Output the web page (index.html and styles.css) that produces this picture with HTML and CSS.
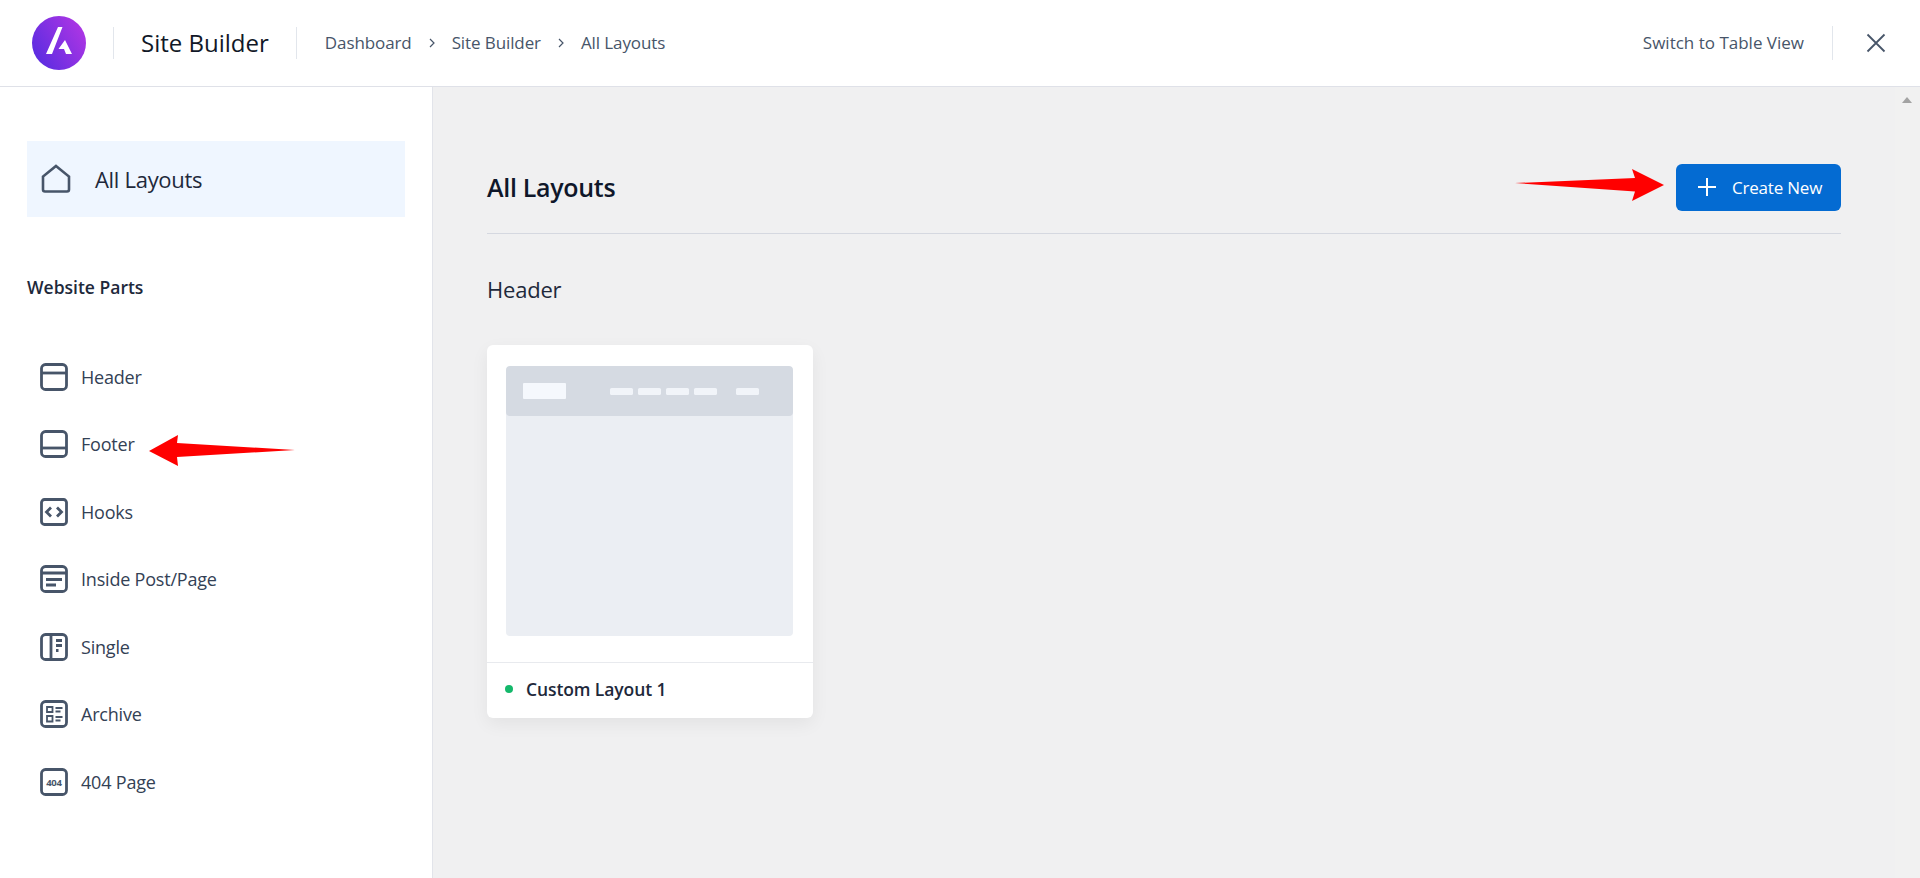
FILE: index.html
```html
<!DOCTYPE html>
<html lang="en">
<head>
    <meta charset="UTF-8">
    <meta name="viewport" content="width=device-width, initial-scale=1.0">
    <title>Site Builder</title>
    <link rel="stylesheet" href="styles.css">
</head>
<body>

    <!-- Top bar -->
    <header class="topbar">
        <svg class="logo" viewBox="0 0 54 54" aria-label="Astra">
            <defs>
                <linearGradient id="logo-grad" x1="0" y1="1" x2="1" y2="0.4">
                    <stop offset="0" stop-color="#4f2be0"/>
                    <stop offset="1" stop-color="#a935e4"/>
                </linearGradient>
            </defs>
            <circle cx="27" cy="27" r="27" fill="url(#logo-grad)"/>
            <path d="M26 11H30.500L20 38H14ZM33 24L40 38H34L32 33H26.500Z" fill="#fff"/>
        </svg>
        <span class="divider"></span>
        <span class="app-name">Site Builder</span>
        <span class="divider"></span>
        <nav class="crumbs">
            <a>Dashboard</a>
            <svg class="crumb-sep" viewBox="0 0 8 12"><path d="M2 2l4 4-4 4"/></svg>
            <a>Site Builder</a>
            <svg class="crumb-sep" viewBox="0 0 8 12"><path d="M2 2l4 4-4 4"/></svg>
            <a>All Layouts</a>
        </nav>
        <div class="topbar-right">
            <a class="switch-view">Switch to Table View</a>
            <span class="divider divider-close"></span>
            <svg class="close" viewBox="0 0 20 20"><path d="M1.500 1.500l17 17M18.500 1.500l-17 17"/></svg>
        </div>
    </header>

    <div class="page">
        <!-- Sidebar -->
        <aside class="sidebar">
            <div class="side-active">
                <svg class="home-icon" viewBox="0 0 30 30"><path d="M15 2L28 12.500V25.500a2 2 0 0 1-2 2H4a2 2 0 0 1-2-2V12.500Z"/></svg>
                <span>All Layouts</span>
            </div>
            <h3 class="side-title">Website Parts</h3>
            <ul class="side-list">
                <li>
                    <svg class="part-icon" viewBox="0 0 28 28"><rect x="1.500" y="1.500" width="25" height="25" rx="4"/><path d="M1.500 10h25"/></svg>
                    Header
                </li>
                <li>
                    <svg class="part-icon" viewBox="0 0 28 28"><rect x="1.500" y="1.500" width="25" height="25" rx="4"/><path d="M1.500 18h25"/></svg>
                    Footer
                </li>
                <li>
                    <svg class="part-icon" viewBox="0 0 28 28"><rect x="1.500" y="1.500" width="25" height="25" rx="3"/><path d="M11 9.500L6.500 14l4.500 4.500M17 9.500l4.500 4.500-4.500 4.500"/></svg>
                    Hooks
                </li>
                <li>
                    <svg class="part-icon" viewBox="0 0 28 28"><rect x="1.500" y="1.500" width="25" height="25" rx="4"/><path d="M1.500 8h25M6 14.500h16M6 20h10"/></svg>
                    Inside Post/Page
                </li>
                <li>
                    <svg class="part-icon" viewBox="0 0 28 28"><rect x="1.500" y="1.500" width="25" height="25" rx="4"/><path d="M11 1.500v25M16 7.500h6M16 12.500h6M16 17.500h2.500"/></svg>
                    Single
                </li>
                <li>
                    <svg class="part-icon" viewBox="0 0 28 28"><rect x="1.500" y="1.500" width="25" height="25" rx="4"/><path class="thin" d="M7 7h5.500v5H7ZM7 16h5.500v5.500H7ZM15.500 8h7M15.500 11.500h5M15.500 17h7M15.500 20.500h5"/></svg>
                    Archive
                </li>
                <li>
                    <svg class="part-icon" viewBox="0 0 28 28"><rect x="1.500" y="1.500" width="25" height="25" rx="4"/><text x="14" y="17.500" class="icon-404">404</text></svg>
                    404 Page
                </li>
            </ul>
        </aside>

        <!-- Main content -->
        <main class="main">
            <div class="content">
                <div class="content-head">
                    <h1>All Layouts</h1>
                    <button class="create-btn">
                        <svg class="plus" viewBox="0 0 18 18"><path d="M9 0v18M0 9h18"/></svg>
                        Create New
                    </button>
                </div>
                <h2 class="section-title">Header</h2>
                <div class="card">
                    <div class="card-body">
                        <div class="preview">
                            <div class="preview-bar">
                                <span class="preview-logo"></span>
                                <span class="preview-links">
                                    <i></i><i></i><i></i><i></i><i class="last"></i>
                                </span>
                            </div>
                        </div>
                    </div>
                    <div class="card-foot">
                        <span class="dot"></span>
                        Custom Layout 1
                    </div>
                </div>
            </div>
            <div class="scrollbar"><span class="scroll-up"></span></div>
        </main>
    </div>

    <!-- Red arrows drawn on top of the screenshot -->
    <svg class="arrow arrow-create" viewBox="0 0 150 34"><path d="M0 15L120 10 117 1 149 17 117 33 120 23.500Z"/></svg>
    <svg class="arrow arrow-footer" viewBox="0 0 147 33"><path d="M0 16L29 0 28 8 146 15 28 22 29 31Z"/></svg>

</body>
</html>
```

FILE: styles.css
```css
* {
    box-sizing: border-box;
}
html, body {
    height: 100%;
}
body {
    margin: 0;
    font-family: "Open Sans", "Noto Sans", sans-serif;
    color: #1e293b;
    background: #fff;
    overflow: hidden;
    display: flex;
    flex-direction: column;
}

/* Top bar */
.topbar {
    height: 87px;
    flex: none;
    display: flex;
    align-items: center;
    padding: 0 34px 1px 32px;
    background: #fff;
    border-bottom: 1px solid #dfe1e8;
}
.logo {
    width: 54px;
    height: 54px;
    flex: none;
}
.divider {
    width: 1px;
    height: 32px;
    background: #e2e6ec;
    flex: none;
    margin-left: 27px;
}
.app-name {
    margin-left: 27px;
    font-size: 24px;
    font-weight: 500;
    color: #111827;
}
.crumbs {
    margin-left: 28px;
    display: flex;
    align-items: center;
    font-size: 17px;
    color: #475569;
    letter-spacing: -0.1px;
}
.crumb-sep {
    width: 8px;
    height: 12px;
    margin: 0 16px;
    fill: none;
    stroke: #475569;
    stroke-width: 1.200;
}
.topbar-right {
    margin-left: auto;
    display: flex;
    align-items: center;
}
.switch-view {
    font-size: 17px;
    color: #475569;
}
.divider-close {
    height: 34px;
    margin-left: 28px;
}
.close {
    width: 20px;
    height: 20px;
    margin-left: 33px;
    fill: none;
    stroke: #475569;
    stroke-width: 1.800;
}

/* Page body */
.page {
    flex: 1;
    display: flex;
    min-height: 0;
}
.sidebar {
    width: 433px;
    flex: none;
    padding: 54px 27px 0;
    border-right: 1px solid #e2e4ea;
    background: #fff;
}
.side-active {
    height: 76px;
    width: 378px;
    display: flex;
    align-items: center;
    padding-left: 14px;
    background: #eff6ff;
    font-size: 22px;
    font-weight: 500;
    letter-spacing: -0.3px;
    color: #1e293b;
}
.home-icon {
    width: 30px;
    height: 30px;
    margin-right: 24px;
    fill: none;
    stroke: #475569;
    stroke-width: 2.600;
}
.side-title {
    margin: 59px 0 0;
    font-size: 17.500px;
    font-weight: 600;
    line-height: 23px;
    color: #1e293b;
}
.side-list {
    list-style: none;
    margin: 44px 0 0;
    padding: 0 0 0 13px;
}
.side-list li {
    height: 67.500px;
    display: flex;
    align-items: center;
    font-size: 18px;
    color: #334155;
    letter-spacing: -0.2px;
}
.part-icon {
    width: 28px;
    height: 28px;
    margin-right: 13px;
    flex: none;
    fill: none;
    stroke: #475569;
    stroke-width: 2.800;
}
.part-icon .thin {
    stroke-width: 1.800;
}
.icon-404 {
    font-size: 9.500px;
    font-weight: 700;
    text-anchor: middle;
    fill: #475569;
    stroke: none;
}

/* Main area */
.main {
    flex: 1;
    display: flex;
    background: #f0f0f1;
    min-width: 0;
}
.content {
    flex: 1;
    padding: 54px 54px 0;
}
.scrollbar {
    width: 25px;
    flex: none;
    background: #f1f1f1;
    padding: 10px 0 0 7px;
}
.scroll-up {
    display: block;
    width: 0;
    height: 0;
    border-left: 5.500px solid transparent;
    border-right: 5.500px solid transparent;
    border-bottom: 6px solid #a3a3a3;
}
.content-head {
    height: 93px;
    display: flex;
    align-items: center;
    justify-content: space-between;
    border-bottom: 1px solid #d5d8e0;
}
.content-head h1 {
    margin: 0;
    font-size: 25px;
    font-weight: 600;
    letter-spacing: -0.3px;
    color: #0f172a;
}
.create-btn {
    width: 165px;
    height: 47px;
    display: flex;
    align-items: center;
    padding: 0 0 0 22px;
    border: none;
    border-radius: 6px;
    background: #046bd2;
    color: #fff;
    font-family: inherit;
    font-size: 17px;
    letter-spacing: -0.2px;
}
.plus {
    width: 18px;
    height: 18px;
    margin-right: 16px;
    fill: none;
    stroke: #fff;
    stroke-width: 2;
}
.section-title {
    margin: 40px 0 0;
    font-size: 22px;
    font-weight: 500;
    line-height: 30px;
    letter-spacing: -0.2px;
    color: #1e293b;
}
.card {
    width: 326px;
    margin-top: 41px;
    background: #fff;
    border-radius: 6px;
    box-shadow: 0 6px 18px rgba(0, 0, 0, 0.06);
}
.card-body {
    padding: 21px 20px 26px 19px;
}
.preview {
    height: 270px;
    border-radius: 4px;
    background: #ebeef3;
    overflow: hidden;
}
.preview-bar {
    height: 50px;
    display: flex;
    align-items: center;
    padding-left: 17px;
    background: #d5dae2;
    border-radius: 4px;
}
.preview-logo {
    width: 43px;
    height: 16px;
    border-radius: 1px;
    background: #f5f8fd;
}
.preview-links {
    display: flex;
    gap: 5px;
    margin-left: 44px;
}
.preview-links i {
    width: 23px;
    height: 7px;
    border-radius: 1.500px;
    background: #f1f4f9;
}
.preview-links i.last {
    margin-left: 14px;
}
.card-foot {
    height: 56px;
    border-top: 1px solid #e8eaee;
    display: flex;
    align-items: center;
    padding: 0 0 3px 18px;
    font-size: 17.500px;
    font-weight: 600;
    letter-spacing: -0.1px;
    color: #1e293b;
}
.dot {
    width: 8px;
    height: 8px;
    border-radius: 50%;
    background: #14b86b;
    margin-right: 13px;
}

/* Annotation arrows */
.arrow {
    position: absolute;
    fill: #ff0000;
}
.arrow-create {
    left: 1515px;
    top: 168px;
    width: 150px;
    height: 34px;
}
.arrow-footer {
    left: 149px;
    top: 435px;
    width: 147px;
    height: 33px;
}
```
